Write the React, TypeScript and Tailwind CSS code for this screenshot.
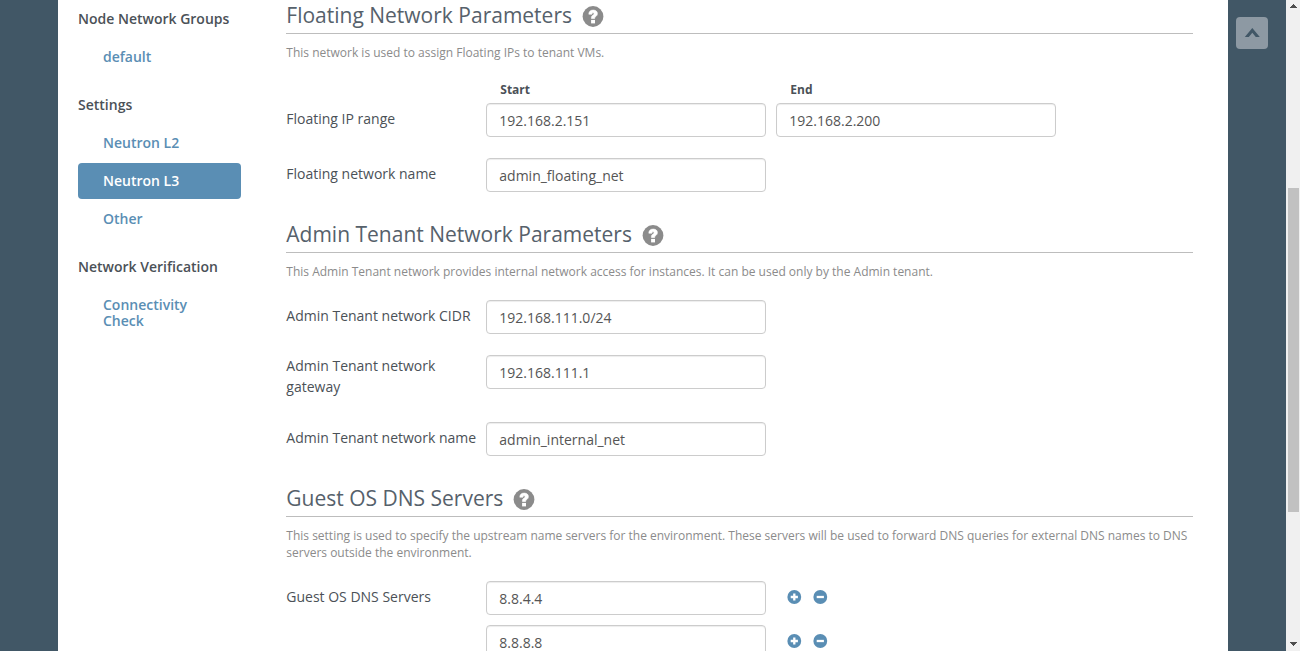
import type { ReactNode } from 'react';

const HelpIcon = () => (
  <svg viewBox="0 0 22 21" className="mt-[6px] h-[21px] w-[22px] shrink-0" aria-hidden="true">
    <g transform="translate(.5 0)">
      <circle cx="10.5" cy="10.5" r="10.4" fill="#8b8b8b" />
      <path
        d="M6.3 8.2C6.4 5.5 8 4.1 10.7 4.1c2.6 0 4.2 1.4 4.2 3.5 0 1.5-.8 2.4-1.9 3.2-.6.4-.8.7-.8 1.4v.3H8.9v-.8c0-1.3.7-2 1.7-2.7.7-.5 1-.8 1-1.3 0-.6-.4-.9-1-.9-.8 0-1.2.5-1.2 1.4z"
        fill="#fff"
        stroke="#fff"
        strokeWidth=".6"
      />
      <rect x="8.6" y="13.9" width="3.9" height="3.5" fill="#fff" />
    </g>
  </svg>
);

const SignIcon = ({ plus }: { plus?: boolean }) => (
  <svg viewBox="0 0 15 14" className="h-[14px] w-[15px]" aria-hidden="true">
    <circle cx="7.3" cy="7" r="6.9" fill="#5a8eb4" />
    <path d={plus ? 'M3.7 7h7.2M7.3 3.4v7.2' : 'M3.7 7h7.2'} stroke="#fff" strokeWidth="2.3" />
  </svg>
);

const Field = ({ value }: { value: string }) => (
  <input
    readOnly
    defaultValue={value}
    className="h-[34px] w-[280px] shrink-0 rounded border border-[#ccc] bg-white px-3 text-[14px] text-[#555] shadow-[inset_0_1px_1px_rgba(0,0,0,0.075)] outline-none"
  />
);

const Section = ({ title, text, children }: { title: string; text: string; children: ReactNode }) => (
  <section className="mb-[27px]">
    <h3 className="flex h-[34px] gap-[10px] border-b border-[#bdbdbd] text-[21px] leading-[30px] text-[#56616b]">
      {title}
      <HelpIcon />
    </h3>
    <p className="mt-[10px] mb-5 text-[12px] leading-[17px] text-[#8b8b8b]">{text}</p>
    <div className="flex flex-col gap-[21px]">{children}</div>
  </section>
);

const Row = ({ label, tall, children }: { label: string; tall?: boolean; children: ReactNode }) => (
  <div className={tall ? 'flex h-[46px] items-start' : 'flex items-start'}>
    <label className={tall ? 'w-[200px] pr-8 text-[14px] leading-[21px]' : 'w-[200px] pt-[5px] text-[14px] leading-[21px]'}>
      {label}
    </label>
    {children}
  </div>
);

const groups = [
  { title: 'Node Network Groups', items: ['default'] },
  { title: 'Settings', items: ['Neutron L2', 'Neutron L3', 'Other'] },
  { title: 'Network Verification', items: ['Connectivity Check'] },
];

const Sidebar = () => (
  <nav className="flex w-[163px] shrink-0 flex-col gap-3 pt-px text-[14px] leading-4 font-semibold">
    {groups.map((group) => (
      <div key={group.title} className="flex flex-col gap-[2px]">
        <div className="py-[10px] whitespace-nowrap text-[#4b5157]">{group.title}</div>
        {group.items.map((item) => (
          <a
            key={item}
            className={
              item === 'Neutron L3'
                ? 'rounded bg-[#5a8eb4] py-[10px] pr-[15px] pl-[25px] text-white'
                : 'rounded py-[10px] pr-[15px] pl-[25px] text-[#5a8eb4]'
            }
          >
            {item}
          </a>
        ))}
      </div>
    ))}
  </nav>
);

export default function App() {
  return (
    <div className="flex h-[651px] w-[1300px] overflow-hidden bg-[#415766] font-['Open_Sans',sans-serif] text-[#4b5157]">
      <div className="ml-[58px] flex w-[1170px] shrink-0 bg-white pl-5">
        <Sidebar />
        <main className="ml-[45.3px] w-[907px]">
          <Section title="Floating Network Parameters" text="This network is used to assign Floating IPs to tenant VMs.">
            <div>
              <div className="flex h-[22px] gap-[10px] pl-[200px] text-[12px] leading-[17px] font-bold">
                <span className="w-[280px] pl-[14px]">Start</span>
                <span className="w-[280px] pl-[14px]">End</span>
              </div>
              <Row label="Floating IP range">
                <div className="flex gap-[10px]">
                  <Field value="192.168.2.151" />
                  <Field value="192.168.2.200" />
                </div>
              </Row>
            </div>
            <Row label="Floating network name">
              <Field value="admin_floating_net" />
            </Row>
          </Section>
          <Section
            title="Admin Tenant Network Parameters"
            text="This Admin Tenant network provides internal network access for instances. It can be used only by the Admin tenant."
          >
            <Row label="Admin Tenant network CIDR">
              <Field value="192.168.111.0/24" />
            </Row>
            <Row label="Admin Tenant network gateway" tall>
              <Field value="192.168.111.1" />
            </Row>
            <Row label="Admin Tenant network name">
              <Field value="admin_internal_net" />
            </Row>
          </Section>
          <Section
            title="Guest OS DNS Servers"
            text="This setting is used to specify the upstream name servers for the environment. These servers will be used to forward DNS queries for external DNS names to DNS servers outside the environment."
          >
            <Row label="Guest OS DNS Servers">
              <div className="flex flex-col gap-[10px]">
                {['8.8.4.4', '8.8.8.8'].map((ip) => (
                  <div key={ip} className="flex items-start">
                    <Field value={ip} />
                    <div className="mt-[9px] ml-[21px] flex gap-[11px]">
                      <SignIcon plus />
                      <SignIcon />
                    </div>
                  </div>
                ))}
              </div>
            </Row>
          </Section>
        </main>
      </div>
      <div className="flex w-[58px] shrink-0 justify-start pt-[17px] pl-2">
        <button className="flex h-8 w-8 items-center justify-center rounded bg-[#8d99a3]" aria-label="Back to top">
          <svg viewBox="0 0 32 32" className="h-8 w-8">
            <path d="M8.8 20 16.3 11 23.8 20H19.8L16.3 15.7 12.8 20z" fill="#415766" />
          </svg>
        </button>
      </div>
      <div className="flex w-[14px] shrink-0 flex-col items-center bg-[#f0f0f0]">
        <svg viewBox="0 0 14 188" className="h-[188px] w-[14px]" shapeRendering="crispEdges">
          <path d="M4 8 7.5 4 11 8z" fill="#4d4d4d" />
        </svg>
        <div className="ml-px h-[324px] w-[11px] bg-[#c1c1c1]" />
        <svg viewBox="0 0 14 139" className="h-[139px] w-[14px]" shapeRendering="crispEdges">
          <path d="M4 130 7.5 134 11 130z" fill="#4d4d4d" />
        </svg>
      </div>
    </div>
  );
}
